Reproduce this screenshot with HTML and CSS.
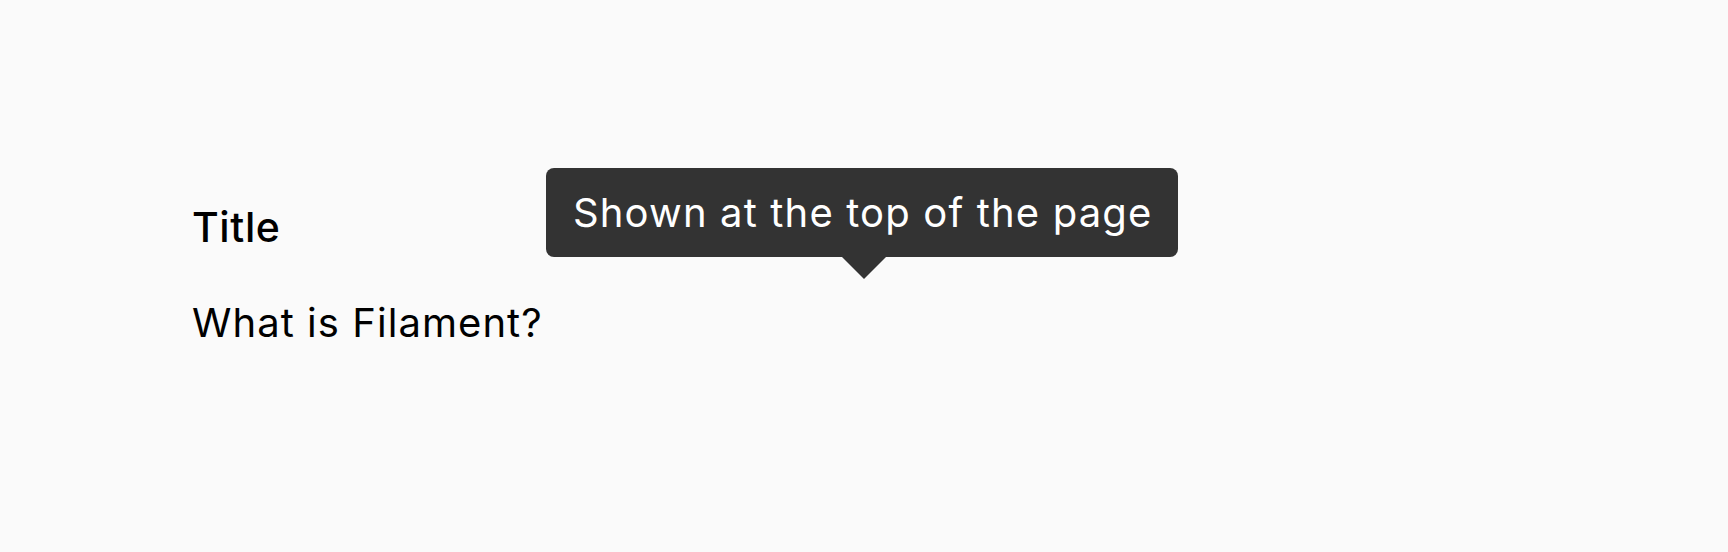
FILE: index.html
```html
<!DOCTYPE html>
<html lang="en">
<head>
<meta charset="utf-8">
<title>Tooltip</title>
<link rel="stylesheet" href="styles.css">
</head>
<body>
<main class="page">
  <section class="field">
    <h2 class="field-label">Title</h2>
    <p class="field-value">What is Filament?</p>
  </section>
  <div class="tooltip" role="tooltip">Shown at the top of the page</div>
</main>
</body>
</html>
```
FILE: styles.css
```css
html, body {
  margin: 0;
  padding: 0;
  background: #fafafa;
}
body {
  font-family: Inter, "Noto Sans", sans-serif;
  color: #000;
  width: 1728px;
  height: 552px;
  overflow: hidden;
}
.page {
  position: relative;
  height: 552px;
  box-sizing: border-box;
  padding: 202px 0 0 192px;
}
.field {
  display: flex;
  flex-direction: column;
  gap: 46px;
}
.field-label {
  margin: 0;
  font-size: 41px;
  font-weight: 500;
  line-height: normal;
  letter-spacing: 0.6px;
}
.field-value {
  margin: 0;
  font-size: 40px;
  font-weight: 400;
  line-height: normal;
  letter-spacing: 1.05px;
}
.tooltip {
  position: absolute;
  left: 546px;
  top: 168px;
  background: #333333;
  color: #fff;
  font-size: 40px;
  line-height: normal;
  letter-spacing: 1.15px;
  padding: 20px 26px 20px 27px;
  border-radius: 8px;
  white-space: nowrap;
}
.tooltip::after {
  content: "";
  position: absolute;
  left: 50%;
  top: 100%;
  margin-left: -20px;
  border-left: 22px solid transparent;
  border-right: 22px solid transparent;
  border-top: 22px solid #333333;
}
```
